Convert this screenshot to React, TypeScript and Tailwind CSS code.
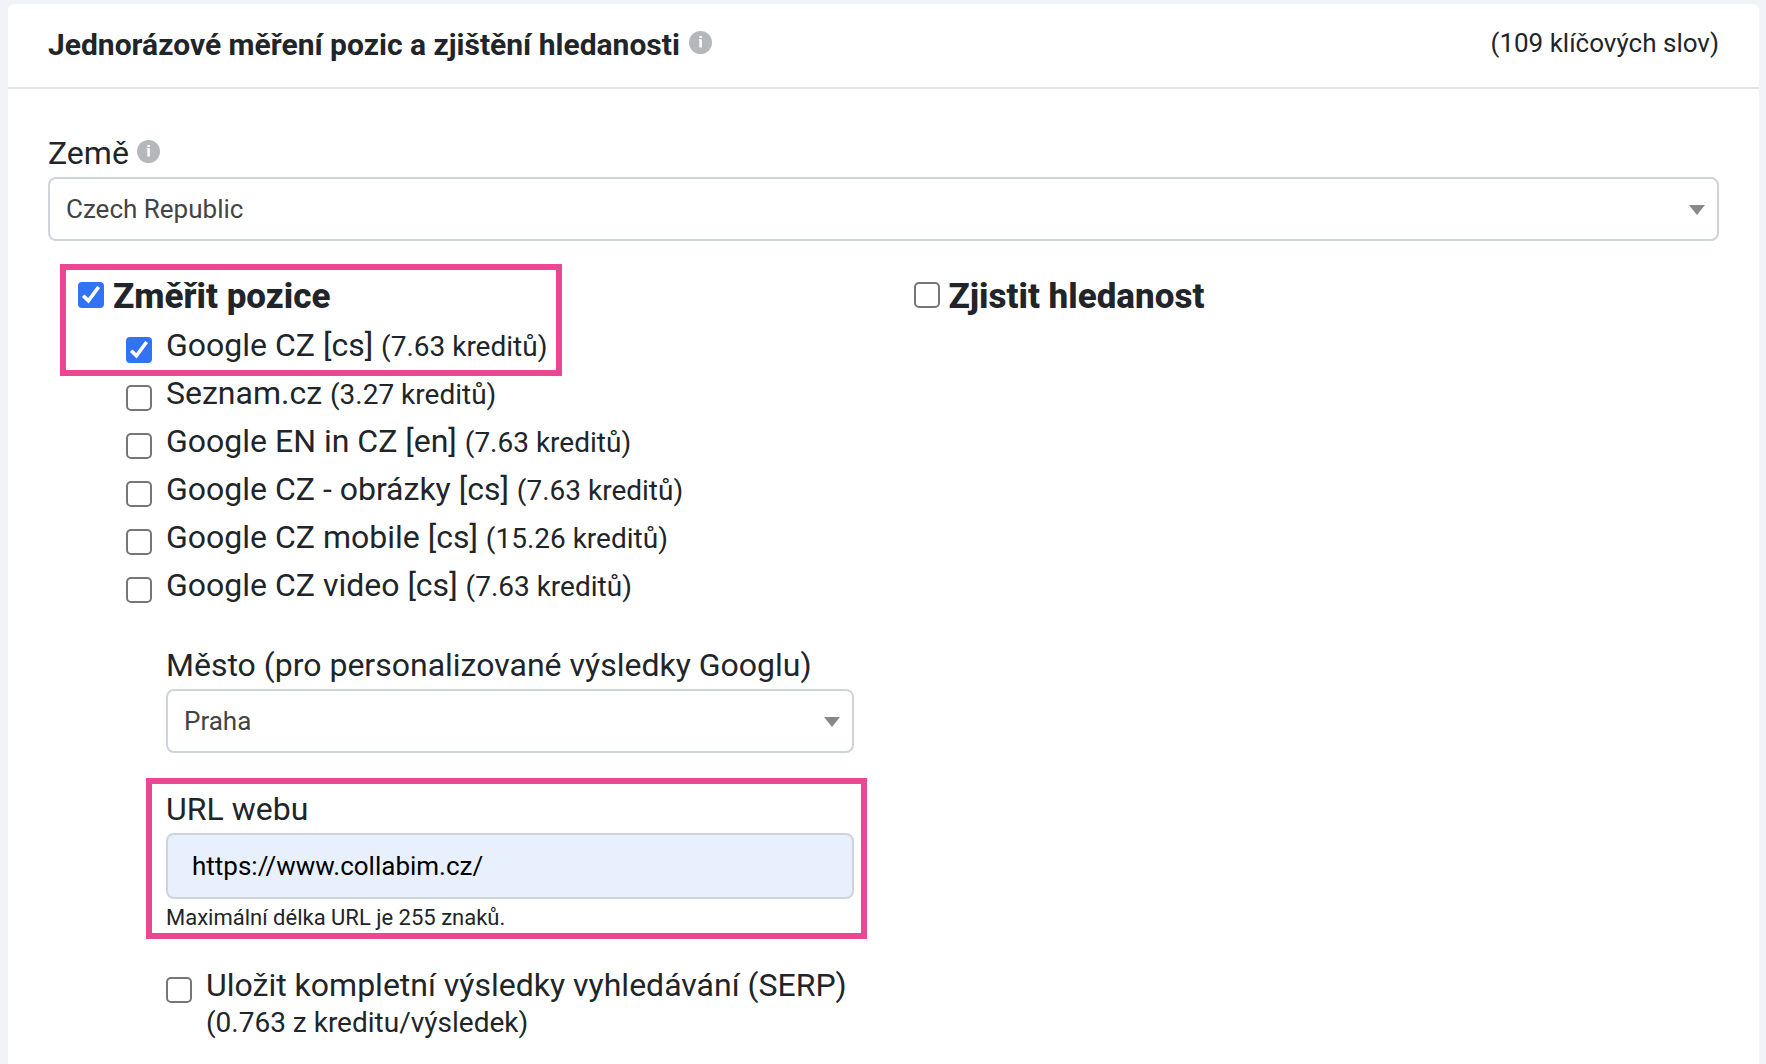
import { useState } from 'react';

type Engine = {
  id: string;
  name: string;
  credits: string;
};

const ENGINES: Engine[] = [
  { id: 'google-cz', name: 'Google CZ [cs]', credits: '7.63' },
  { id: 'seznam', name: 'Seznam.cz', credits: '3.27' },
  { id: 'google-en', name: 'Google EN in CZ [en]', credits: '7.63' },
  { id: 'google-images', name: 'Google CZ - obrázky [cs]', credits: '7.63' },
  { id: 'google-mobile', name: 'Google CZ mobile [cs]', credits: '15.26' },
  { id: 'google-video', name: 'Google CZ video [cs]', credits: '7.63' },
];

function InfoIcon() {
  return (
    <svg aria-hidden="true" className="size-[23px] shrink-0" viewBox="0 0 24 24">
      <circle cx="12" cy="12" fill="#b4b8bb" r="12" />
      <path d="M10.8 5.2h2.6v2.2h-2.6zM10.2 8.6h3.2v8.6h-2.6v-7.4h-.6z" fill="#fff" />
    </svg>
  );
}

type CheckboxProps = {
  id: string;
  checked: boolean;
  onChange: () => void;
};

function Checkbox({ id, checked, onChange }: CheckboxProps) {
  return (
    <span className="relative block size-[26px] shrink-0">
      <input
        checked={checked}
        className="block size-[26px] appearance-none rounded-[5px] border-2 border-[#767676] bg-white checked:rounded-[4px] checked:border-[#3273f6] checked:bg-[#3273f6]"
        id={id}
        onChange={onChange}
        type="checkbox"
      />
      {checked && (
        <svg aria-hidden="true" className="pointer-events-none absolute inset-0" fill="none" viewBox="0 0 26 26">
          <path d="M5.2 13.8 10.4 18.8 20.6 5" stroke="#fff" strokeWidth="3.6" />
        </svg>
      )}
    </span>
  );
}

type SelectProps = {
  id: string;
  options: string[];
};

function Select({ id, options }: SelectProps) {
  return (
    <div className="relative">
      <select
        className="block h-16 w-full appearance-none rounded-lg border-2 border-[#ced4da] bg-white px-4 text-[26px] text-[#444]"
        id={id}
      >
        {options.map((option) => (
          <option key={option}>{option}</option>
        ))}
      </select>
      <svg
        aria-hidden="true"
        className="pointer-events-none absolute top-7 right-3.5 h-2.5 w-4"
        viewBox="0 0 16 10"
      >
        <path d="M0 0h16l-8 10z" fill="#888" />
      </svg>
    </div>
  );
}

export default function App() {
  const [measure, setMeasure] = useState(true);
  const [volume, setVolume] = useState(false);
  const [saveSerp, setSaveSerp] = useState(false);
  const [selected, setSelected] = useState<string[]>(['google-cz']);
  const [url, setUrl] = useState('https://www.collabim.cz/');

  const toggleEngine = (id: string) => {
    setSelected((prev) => (prev.includes(id) ? prev.filter((item) => item !== id) : [...prev, id]));
  };

  const renderEngine = (engine: Engine) => (
    <li className="flex h-12 gap-3.5 pl-12" key={engine.id}>
      <div className="pt-4">
        <Checkbox
          checked={selected.includes(engine.id)}
          id={engine.id}
          onChange={() => toggleEngine(engine.id)}
        />
      </div>
      <label className="whitespace-nowrap leading-[48px]" htmlFor={engine.id}>
        {engine.name} <span className="text-[28px]">({engine.credits} kreditů)</span>
      </label>
    </li>
  );

  return (
    <div className="min-h-screen bg-[#f1f3f8] pt-1 pr-[7px] pl-2 font-['Roboto',sans-serif] text-[32px] leading-[48px] text-[#212529]">
      <main className="min-h-[calc(100vh-4px)] rounded-t-md bg-white">
        <header className="flex items-start justify-between border-b-2 border-[#e3e4e6] px-10 pt-4 pb-[17px]">
          <div className="flex gap-[9px]">
            <h1 className="text-[30px] leading-[50px] font-bold">Jednorázové měření pozic a zjištění hledanosti</h1>
            <div className="pt-[11px]">
              <InfoIcon />
            </div>
          </div>
          <span className="text-[26px] leading-[46px]">(109 klíčových slov)</span>
        </header>

        <form className="px-10 pt-10">
          <div className="flex gap-2">
            <label htmlFor="country">Země</label>
            <div className="pt-[11px]">
              <InfoIcon />
            </div>
          </div>
          <Select id="country" options={['Czech Republic', 'Slovakia', 'Poland']} />

          <div className="grid grid-cols-2 pt-8">
            <section className="px-[30px]">
              <div className="relative w-fit">
                <div className="pointer-events-none absolute -top-[9px] -right-[15px] -bottom-[7px] -left-[18px] border-[6px] border-[#ec4793]" />
                <div className="flex h-12 gap-[9px]">
                  <div className="pt-[9px]">
                    <Checkbox checked={measure} id="measure" onChange={() => setMeasure(!measure)} />
                  </div>
                  <label className="text-[35px] font-extrabold" htmlFor="measure">
                    Změřit pozice
                  </label>
                </div>
                <ul>{renderEngine(ENGINES[0])}</ul>
              </div>
              <ul>{ENGINES.slice(1).map(renderEngine)}</ul>

              <div className="pt-8 pl-[88px]">
                <label className="block whitespace-nowrap" htmlFor="city">
                  Město (pro personalizované výsledky Googlu)
                </label>
                <Select id="city" options={['Praha', 'Brno', 'Ostrava']} />

                <div className="relative mt-8">
                  <div className="pointer-events-none absolute -top-[7px] -right-[13px] -bottom-1.5 -left-5 border-[6px] border-[#ec4793]" />
                  <label className="block" htmlFor="url">
                    URL webu
                  </label>
                  <input
                    aria-describedby="url-help"
                    className="block h-[66px] w-full rounded-lg border-2 border-[#ced4da] bg-[#e8f0fe] px-6 text-[26px] text-black"
                    id="url"
                    maxLength={255}
                    onChange={(event) => setUrl(event.target.value)}
                    type="text"
                    value={url}
                  />
                  <p className="pt-1 text-[22px] leading-[30px]" id="url-help">
                    Maximální délka URL je 255 znaků.
                  </p>
                </div>

                <div className="flex gap-3.5 pt-8">
                  <div className="pt-3">
                    <Checkbox checked={saveSerp} id="serp" onChange={() => setSaveSerp(!saveSerp)} />
                  </div>
                  <label className="whitespace-nowrap" htmlFor="serp">
                    <span className="block leading-10">Uložit kompletní výsledky vyhledávání (SERP)</span>
                    <span className="block text-[28px] leading-9">(0.763 z kreditu/výsledek)</span>
                  </label>
                </div>
              </div>
            </section>

            <section className="px-[30px]">
              <div className="flex h-12 gap-[9px]">
                <div className="pt-[9px]">
                  <Checkbox checked={volume} id="volume" onChange={() => setVolume(!volume)} />
                </div>
                <label className="text-[35px] font-extrabold" htmlFor="volume">
                  Zjistit hledanost
                </label>
              </div>
            </section>
          </div>
        </form>
      </main>
    </div>
  );
}
